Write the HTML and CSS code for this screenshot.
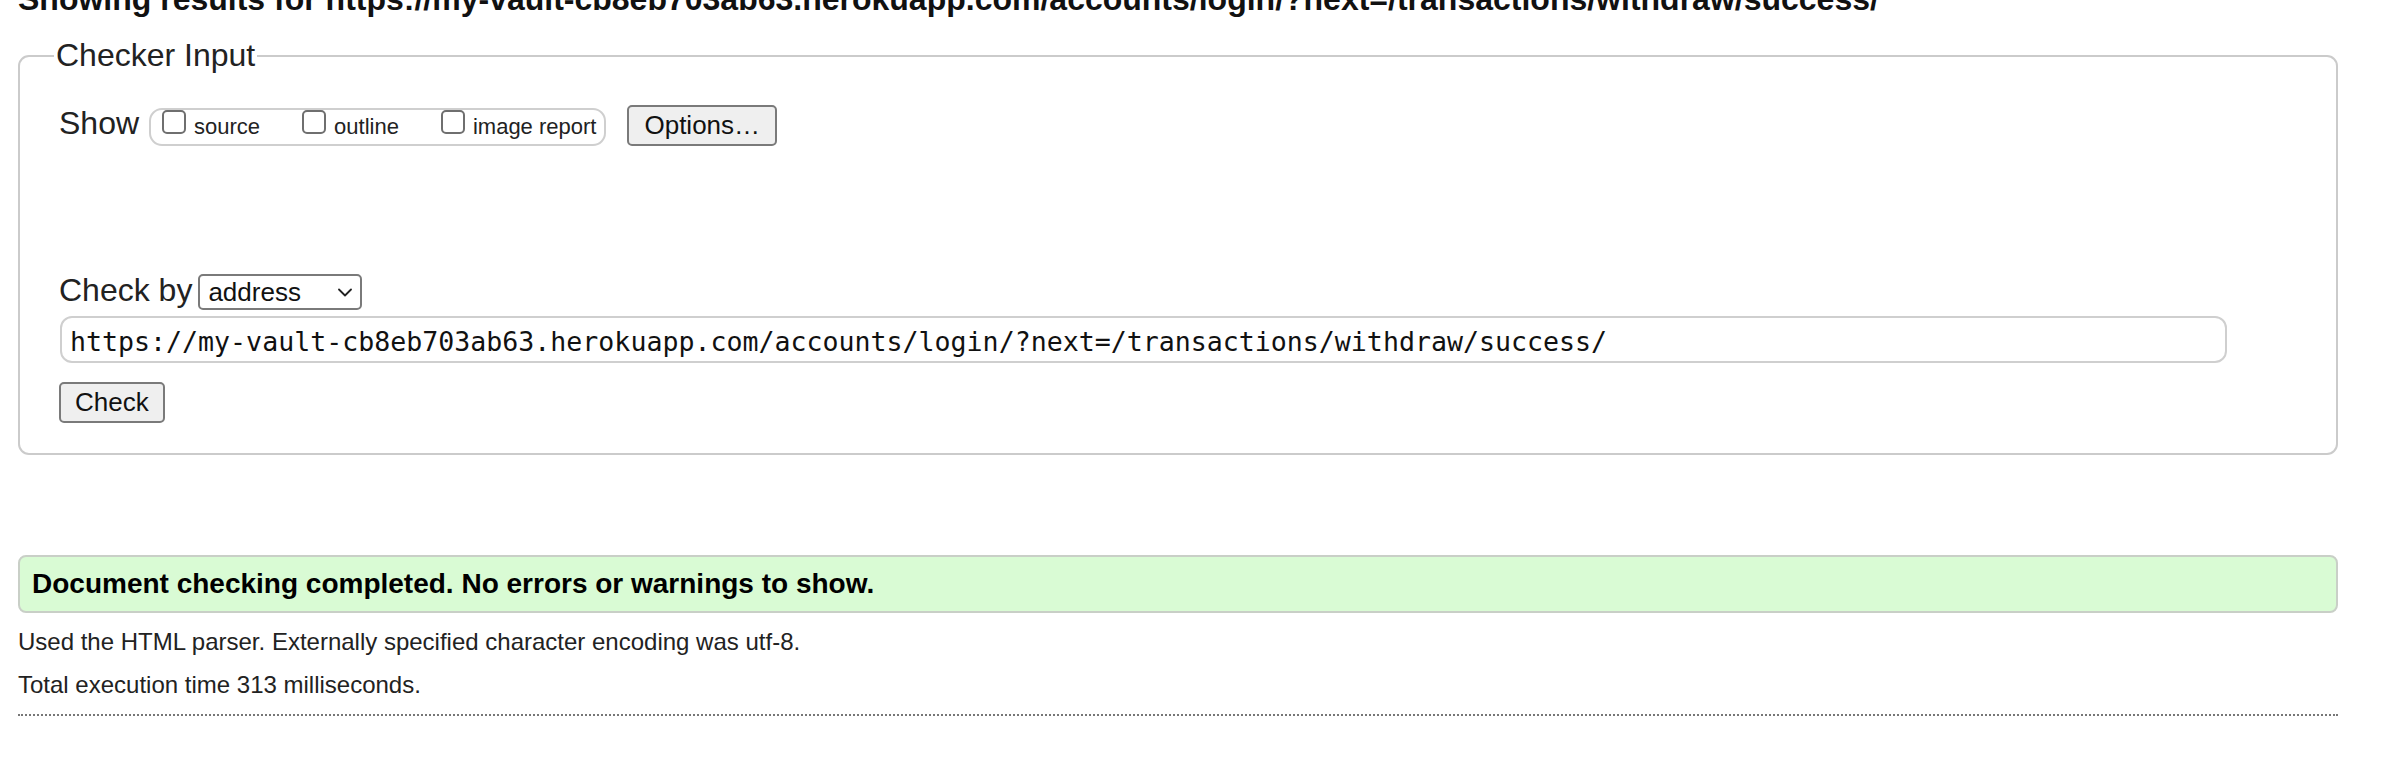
FILE: index.html
```html
<!DOCTYPE html>
<html lang="en">
<head>
<meta charset="utf-8">
<title>Nu Html Checker</title>
<link rel="stylesheet" href="styles.css">
</head>
<body>
<div class="page">
  <h2 class="results-title">Showing results for https://my-vault-cb8eb703ab63.herokuapp.com/accounts/login/?next=/transactions/withdraw/success/</h2>

  <fieldset class="checker">
    <legend class="checker-legend">Checker Input</legend>
    <div class="form-rows">
      <div class="row show-row">
        <span class="row-label show-label">Show</span>
        <span class="check-group">
          <label class="check"><input type="checkbox" class="box"><span>source</span></label>
          <label class="check"><input type="checkbox" class="box"><span>outline</span></label>
          <label class="check"><input type="checkbox" class="box"><span>image report</span></label>
        </span>
        <button type="button" class="btn options-btn">Options…</button>
      </div>

      <div class="options-space"></div>

      <div class="row checkby-row">
        <span class="row-label checkby-label">Check by</span>
        <span class="select-wrap">
          <select class="select"><option>address</option></select>
          <svg class="chevron" width="14" height="9" viewBox="0 0 14 9"><polyline points="1,1.5 7,7.5 13,1.5" fill="none" stroke="#222" stroke-width="1.8" stroke-linecap="round" stroke-linejoin="round"/></svg>
        </span>
      </div>

      <div class="url-row">
        <input type="text" class="url-input" value="https://my-vault-cb8eb703ab63.herokuapp.com/accounts/login/?next=/transactions/withdraw/success/">
      </div>

      <div class="submit-row">
        <button type="button" class="btn check-btn">Check</button>
      </div>
    </div>
  </fieldset>

  <div class="success">
    <p class="success-text">Document checking completed. No errors or warnings to show.</p>
  </div>

  <p class="details">Used the HTML parser. Externally specified character encoding was utf-8.</p>
  <p class="details">Total execution time 313 milliseconds.</p>

  <hr class="dotted">
</div>
</body>
</html>
```

FILE: styles.css
```css
html, body {
  margin: 0;
  padding: 0;
  background: #fff;
}

body {
  font-family: "Liberation Sans", Arial, sans-serif;
  color: #222;
  overflow: hidden;
}

.page {
  width: 2320px;
  margin-left: 18px;
}

.results-title {
  margin: -19px 0 0;
  font-size: 32px;
  font-weight: bold;
  color: #111;
  white-space: nowrap;
  line-height: normal;
}

.checker {
  margin: 19px 0 0;
  padding: 0 39px 30px 34px;
  border: 2px solid #cbcbcb;
  border-radius: 11px;
  min-width: 0;
}

.checker-legend {
  padding: 0 2px;
  font-size: 32px;
  color: #222;
  line-height: normal;
}

.form-rows {
  padding-left: 5px;
  padding-top: 31px;
}

.row {
  display: flex;
  align-items: baseline;
}

.row-label {
  font-size: 32px;
  line-height: normal;
  color: #222;
}

.show-label {
  margin-right: 10px;
}

.check-group {
  display: inline-flex;
  align-items: baseline;
  gap: 42px;
  padding: 0 8px 4px 11px;
  border: 2px solid #cfcfcf;
  border-radius: 13px;
}

.check {
  display: inline-flex;
  align-items: baseline;
  gap: 8px;
  font-size: 22px;
  line-height: normal;
  color: #222;
}

.box {
  -webkit-appearance: none;
  appearance: none;
  width: 24px;
  height: 24px;
  margin: 0;
  border: 2px solid #6f6f6f;
  border-radius: 5px;
  background: #fff;
  box-sizing: border-box;
}

.btn {
  font-family: "Liberation Sans", Arial, sans-serif;
  font-size: 26px;
  line-height: 29px;
  color: #111;
  background: #efefef;
  border: 2px solid #7a7a7a;
  border-radius: 5px;
  padding: 4px 15px;
  margin: 0;
}

.options-btn {
  margin-left: 21px;
}

.options-space {
  height: 126px;
}

.checkby-label {
  margin-right: 6px;
}

.select-wrap {
  position: relative;
  display: inline-block;
}

.select {
  -webkit-appearance: none;
  appearance: none;
  box-sizing: border-box;
  width: 164px;
  height: 36px;
  margin: 0;
  padding: 0 30px 0 8px;
  font-family: "Liberation Sans", Arial, sans-serif;
  font-size: 26px;
  color: #111;
  background: #fff;
  border: 2px solid #7a7a7a;
  border-radius: 5px;
}

.chevron {
  position: absolute;
  right: 10px;
  top: 14px;
  pointer-events: none;
}

.url-row {
  margin-top: 6px;
}

.url-input {
  box-sizing: border-box;
  display: block;
  width: 2167px;
  height: 47px;
  margin: 0 0 0 1px;
  padding: 3px 2px 0 8px;
  font-family: "DejaVu Sans Mono", "Liberation Mono", monospace;
  font-size: 26.6px;
  color: #111;
  background: #fff;
  border: 2px solid #cfcfcf;
  border-radius: 12px;
  outline: none;
}

.submit-row {
  margin-top: 19px;
}

.check-btn {
  padding: 4px 14px;
}

.success {
  margin-top: 100px;
  padding: 11px 12px;
  background: #d9fbd4;
  border: 2px solid #c9cfc7;
  border-radius: 8px;
}

.success-text {
  margin: 0;
  font-size: 28px;
  font-weight: bold;
  line-height: normal;
  color: #000;
}

.details {
  margin: 15px 0 13px;
  font-size: 24px;
  line-height: normal;
  color: #222;
}

.dotted {
  margin: 15px 0 0;
  height: 0;
  border: 0;
  border-top: 2px dotted #777;
}
```
